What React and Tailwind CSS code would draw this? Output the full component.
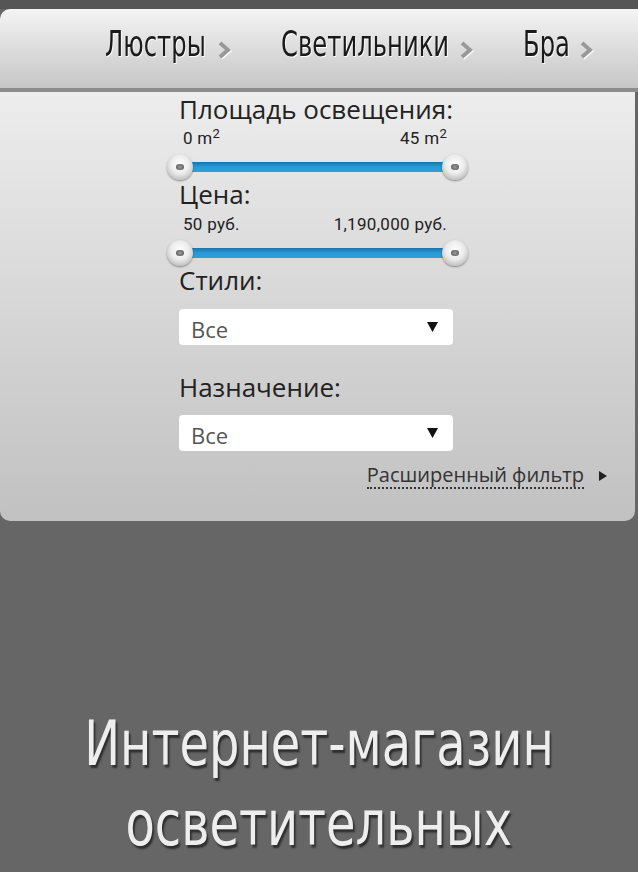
import React from 'react';

const narrow = "font-['DejaVu_Sans_Condensed','Liberation_Sans_Narrow',sans-serif]";

const categories = [
  { name: 'Люстры', w: 'w-[100px]' },
  { name: 'Светильники', w: 'w-[166px]' },
  { name: 'Бра', w: 'w-[44px]' },
];

function Chevron() {
  return (
    <svg width="14" height="20" viewBox="0 0 14 20" className="mt-[14px] drop-shadow-[1px_1px_0_#fff]">
      <polyline points="3,3 11,10 3,17" fill="none" stroke="#999" strokeWidth="4" />
    </svg>
  );
}

function Thumb({ side }) {
  return (
    <div
      className={`absolute top-0 ${side === 'left' ? 'left-0' : 'right-0'} w-[26px] h-[26px] rounded-full bg-[radial-gradient(circle_at_50%_40%,#ffffff_0%,#ececec_45%,#a0a0a0_100%)] shadow-[0_1px_2px_rgba(0,0,0,0.4)] flex items-center justify-center`}
    >
      <div className="w-[8px] h-[6px] rounded-full bg-[radial-gradient(circle,#9a9a9a_0%,#555_100%)]" />
    </div>
  );
}

function Slider() {
  return (
    <div className="relative mt-[6px] -ml-[12px] w-[301px] h-[26px]">
      <div className="absolute left-[13px] right-[13px] top-[8px] h-[10px] bg-gradient-to-b from-[#1b73a8] via-[#2a9ad6] to-[#2b9fdc]" />
      <Thumb side="left" />
      <Thumb side="right" />
    </div>
  );
}

function Select() {
  return (
    <div className="w-[274px] h-[36px] bg-white rounded-[4px] flex items-center justify-between pl-[12px] pr-[15px]">
      <span className="text-[22px] leading-none text-[#555] mt-[4px]">Все</span>
      <svg width="11" height="10" viewBox="0 0 11 10">
        <polygon points="0,0 11,0 5.5,10" fill="#111" />
      </svg>
    </div>
  );
}

export default function App() {
  return (
    <div className="min-h-screen bg-[#666] font-['Open_Sans',sans-serif] overflow-hidden">
      <div className="h-[9px] bg-[#555]" />

      {/* Category bar */}
      <div className={`h-[79px] rounded-tl-[10px] bg-gradient-to-b from-[#f4f4f4] to-[#c6c6c6] flex items-start gap-[50px] pl-[105px] pt-[17px] ${narrow}`}>
        {categories.map((c) => (
          <div key={c.name} className="flex items-start gap-[12px]">
            <div className={`${c.w} whitespace-nowrap`}>
              <span className="inline-block origin-left scale-x-[0.75] text-[36px] leading-none text-[#1a1a1a] [text-shadow:1px_1px_0_#fff]">{c.name}</span>
            </div>
            <Chevron />
          </div>
        ))}
      </div>
      <div className="h-[4px] bg-[#8c8c8c]" />

      {/* Filter panel */}
      <div className="mr-[3px] rounded-b-[10px] bg-gradient-to-b from-[#ededed] to-[#c1c1c1] pt-[3px] pb-[32px]">
        <div className="ml-[179px] w-[288px] text-[#222]">
          <div className="text-[26px] leading-[28px] whitespace-nowrap">Площадь освещения:</div>
          <div className="mt-[5px] flex justify-between pl-[4px] pr-[20px] font-['Roboto',sans-serif] text-[17px] leading-[20px] tracking-[0.3px]">
            <span>0 m<sup className="text-[13px]">2</sup></span>
            <span>45 m<sup className="text-[13px]">2</sup></span>
          </div>
          <Slider />

          <div className="text-[26px] leading-[28px]">Цена:</div>
          <div className="mt-[6px] flex justify-between pl-[4px] pr-[20px] font-['Roboto',sans-serif] text-[17px] leading-[20px] tracking-[0.3px]">
            <span>50 руб.</span>
            <span>1,190,000 руб.</span>
          </div>
          <Slider />

          <div className="text-[26px] leading-[28px]">Стили:</div>
          <div className="mt-[15px]">
            <Select />
          </div>

          <div className="mt-[28px] text-[26px] leading-[28px]">Назначение:</div>
          <div className="mt-[14px]">
            <Select />
          </div>
        </div>

        <div className="mt-[12px] flex justify-end items-center pr-[28px] gap-[15px]">
          <span className="text-[20px] leading-[24px] text-[#333] border-b-2 border-dotted border-[#333]">Расширенный фильтр</span>
          <svg width="8" height="10" viewBox="0 0 8 10">
            <polygon points="0,0 8,5 0,10" fill="#222" />
          </svg>
        </div>
      </div>

      {/* Title */}
      <h1 className={`mt-[183px] text-center text-[62px] leading-[80px] text-[#eeeeee] [text-shadow:2px_3px_2px_#2e2e2e] ${narrow}`}>
        <span className="inline-block scale-x-[0.86]">Интернет-магазин</span>
        <br />
        <span className="inline-block scale-x-[0.86]">осветительных</span>
      </h1>
    </div>
  );
}
